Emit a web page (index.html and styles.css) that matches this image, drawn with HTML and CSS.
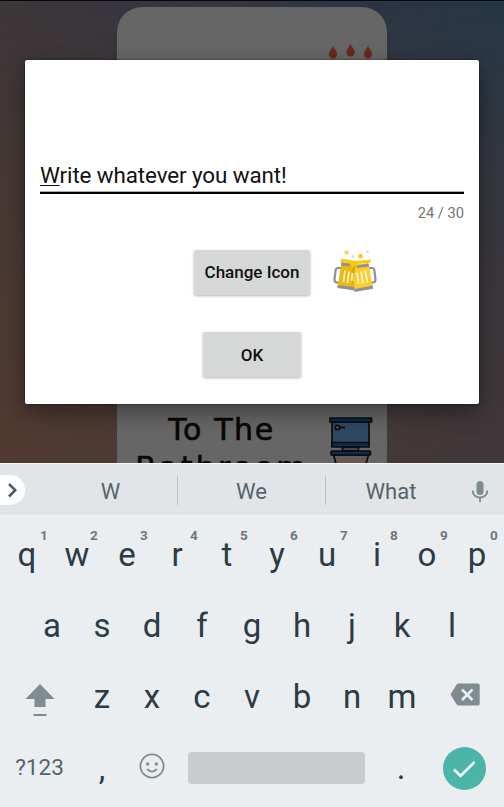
FILE: index.html
```html
<!DOCTYPE html>
<html lang="en">
<head>
<meta charset="utf-8">
<title>Edit choice</title>
<link rel="stylesheet" href="styles.css">
</head>
<body>
<main class="app">
  <section class="list-card">
    <div class="card-top">
      <svg class="drops" width="46" height="22" viewBox="0 0 46 22" fill="#6b271d">
        <path d="M5 4C3.2 7.500 .8 9.800 .8 12.200a4.200 4.200 0 0 0 8.400 0C9.200 9.800 6.800 7.500 5 4Z"/>
        <path d="M22.500 2c-1.800 3.500-4.200 5.800-4.200 8.200a4.200 4.200 0 0 0 8.400 0c0-2.400-2.400-4.700-4.200-8.200Z"/>
        <path d="M40 4c-1.800 3.500-4.200 5.800-4.200 8.200a4.200 4.200 0 0 0 8.400 0c0-2.400-2.400-4.700-4.200-8.200Z"/>
        <path fill="#746039" d="M19 17.500h7v2h-7z"/>
      </svg>
    </div>
    <div class="card-bottom">
      <h2 class="choice"><span class="line-one">To The</span><span class="line-two">Bathroom</span></h2>
      <svg class="toilet" width="44" height="50" viewBox="0 0 44 50" stroke="#0d0b0c" stroke-width="1.700">
        <path fill="#2e4860" d="M3 5h37v24H3z"/>
        <path fill="#042f57" d="M1 1h41.500v4H1zM3 25.500h37V30H3z"/>
        <path fill="#665951" d="M13.500 30.500h16v3h-16z"/>
        <path fill="#665951" d="M4.500 38h35L36 50H8z"/>
        <rect x="2" y="34" width="39.500" height="4" rx="1" fill="#042f57"/>
        <circle cx="8.500" cy="10.500" r="2.200" fill="#665951"/>
        <path d="M10.500 10.500H16"/>
      </svg>
    </div>
  </section>
  <section class="dialog">
    <div class="field"><u>W</u>rite whatever you want!</div>
    <div class="counter">24 / 30</div>
    <div class="icon-row">
      <button class="btn btn-change">Change Icon</button>
      <svg class="beer" width="46" height="46" viewBox="0 0 46 46">
        <circle cx="14.500" cy="4.500" r="2.300" fill="#fbd75b"/>
        <circle cx="21" cy="8.500" r="1.500" fill="#dcdee0"/>
        <circle cx="28.500" cy="8.200" r="2.400" fill="#fbcb16"/>
        <circle cx="35.300" cy="3.700" r="1.500" fill="#dcdee0"/>
        <g fill="none" stroke="#909198" stroke-width="2.200">
          <path d="M9.500 20H6q-2 0-2.300 2L2.500 31q-.2 3 2 3.300l3.500.7"/>
          <path d="M36.500 20H40q2 0 2.300 2l1.200 9q.2 3-2 3.300l-3.500.7"/>
        </g>
        <path fill="#edb90c" d="M9.500 14l15 2-2 25L6 38z"/>
        <path fill="#fbce2a" d="M24.500 16l12-1 4 23.500-18.500 3.500-1.500-12z"/>
        <path fill="#c9960d" d="M23.500 18l-2.500 14 2 8-4-7 2-13z" opacity=".6"/>
        <path fill="#909198" d="M9 14.500l9.500 1v3l-9.500-1zM24.500 17.500l12-2 .5 3-12 1.500zM5.500 37l17 2v3.500l-17-2.500zM22.500 41L41 37.500v3.200l-18.500 3.300z"/>
        <path fill="#fbc90b" d="M9 11q5 0 9 1l6 1 14.500-1.500.5 3-14 1.500-5 3-3-4-8.500-1z"/>
        <g stroke="#fff6d6" stroke-width="1.700">
          <path d="M13 22.500l-1.500 11.500M17 23.500l-1.500 11.500M20.500 25l-1 8M25 24.500l1.500 11.500M29 23.500l2 12M33 22.500l2.500 12"/>
        </g>
      </svg>
    </div>
    <button class="btn btn-ok">OK</button>
  </section>
</main>
<section class="keyboard">
  <div class="suggestions">
    <span class="expand"><svg width="25" height="30" viewBox="0 0 25 30" fill="none" stroke="#4d5d65" stroke-width="2.600"><path d="M9 9l6.200 6.200L9 21.500"/></svg></span>
    <span class="word first">W</span>
    <span class="word second">We</span>
    <span class="word third">What</span>
    <svg class="mic" width="18" height="24" viewBox="0 0 18 24"><rect x="5.500" y="1" width="7" height="14" rx="3.500" fill="#7f8b90"/><path d="M1.800 10.500v1a7.200 6 0 0 0 14.400 0v-1M9 17.500V22" fill="none" stroke="#7f8b90" stroke-width="1.900"/></svg>
  </div>
  <div class="keys">
    <div class="row">
      <span class="key">q<sup>1</sup></span><span class="key">w<sup>2</sup></span><span class="key">e<sup>3</sup></span><span class="key">r<sup>4</sup></span><span class="key">t<sup>5</sup></span><span class="key">y<sup>6</sup></span><span class="key">u<sup>7</sup></span><span class="key">i<sup>8</sup></span><span class="key">o<sup>9</sup></span><span class="key">p<sup>0</sup></span>
    </div>
    <div class="row">
      <span class="key">a</span><span class="key">s</span><span class="key">d</span><span class="key">f</span><span class="key">g</span><span class="key">h</span><span class="key">j</span><span class="key">k</span><span class="key">l</span>
    </div>
    <div class="row">
      <span class="key wide shift"><svg width="30" height="34" viewBox="0 0 30 34" fill="#7f8b90"><path d="M15 1l14.500 15H20.500v8h-11v-8H.5zM8.500 31h13v2h-13z"/></svg></span><span class="key">z</span><span class="key">x</span><span class="key">c</span><span class="key">v</span><span class="key">b</span><span class="key">n</span><span class="key">m</span><span class="key wide erase"><svg width="30" height="23" viewBox="0 0 30 23"><path fill="#7f8b90" d="M8.500.5H28q1.700 0 1.700 1.700v18.600q0 1.700-1.700 1.700H8.500Q7.500 22.500 6.700 21.500L.5 11.500l6.200-10Q7.500.5 8.500.5z"/><path d="M12 6.500l10.500 10.500M22.500 6.500L12 17" stroke="#ebeef1" stroke-width="2.500"/></svg></span>
    </div>
    <div class="row bottom">
      <span class="key wide symbols">?123</span><span class="key">,</span><span class="key"><svg width="26" height="26" viewBox="0 0 26 26" fill="#7f8b90"><circle cx="13" cy="13" r="11.600" fill="none" stroke="#7f8b90" stroke-width="1.800"/><circle cx="8.700" cy="11" r="1.700"/><circle cx="17.300" cy="11" r="1.700"/><path d="M8 16.200q5 4.800 10 0" fill="none" stroke="#7f8b90" stroke-width="1.800"/></svg></span><span class="space"></span><span class="key dot">.</span><span class="enter"><svg width="43" height="43" viewBox="0 0 43 43" fill="none" stroke="#fff" stroke-width="2.500"><path d="M11 22.500l6.500 6.500L31.500 15"/></svg></span>
    </div>
  </div>
</section>
</body>
</html>
```
FILE: styles.css
```css
* { box-sizing: border-box; }
body {
  margin: 0;
  width: 504px;
  height: 807px;
  overflow: hidden;
  font-family: Roboto, sans-serif;
}
.app {
  position: relative;
  height: 463px;
  padding-top: 6px;
  border-top: 1px solid #08080c;
  overflow: hidden;
  background:
    linear-gradient(to bottom, transparent, rgba(75, 58, 52, .95)),
    linear-gradient(to right, #3d373a, #333442 50%, #263747);
}
.app::before {
  content: "";
  position: absolute;
  inset: 0;
  background: linear-gradient(to right, rgba(88, 60, 43, .5), transparent 50%, rgba(58, 54, 63, .55));
  -webkit-mask-image: linear-gradient(transparent, #000);
  mask-image: linear-gradient(transparent, #000);
}
.list-card {
  position: relative;
  display: flex;
  flex-direction: column;
  justify-content: space-between;
  width: 270px;
  height: 480px;
  margin-left: 117px;
  border-radius: 25px;
  background: #666;
}
.card-top { display: flex; justify-content: flex-end; padding: 35px 13px 0 0; }
.card-bottom { display: flex; height: 76px; }
.choice {
  display: flex;
  flex-direction: column;
  width: 206px;
  margin: 0;
  padding-top: 1px;
  color: #080606;
  font: 400 30px/36px "DejaVu Sans", sans-serif;
  -webkit-text-stroke: .6px #080606;
  text-align: center;
}
.line-one { letter-spacing: 1.6px; padding-left: 3px; }
.line-two { letter-spacing: 3.3px; padding: 2px 0 0 4px; }
.toilet { margin: 6px 0 0 6px; }
.dialog {
  position: absolute;
  left: 25px;
  top: 59px;
  display: flex;
  flex-direction: column;
  width: 454px;
  height: 344px;
  padding: 97px 15px 0;
  border-radius: 2px;
  background: #fff;
  box-shadow: 0 0 2px rgba(0, 0, 0, .7), 0 8px 22px rgba(0, 0, 0, .4);
}
.field {
  height: 37px;
  border-bottom: 2px solid #000;
  box-shadow: inset 0 -1px #aaa;
  color: #111;
  font-size: 22.400px;
  line-height: 36px;
  letter-spacing: -.1px;
}
.field u { text-decoration-thickness: 1px; text-underline-offset: 2px; }
.counter {
  height: 56px;
  padding-top: 9px;
  color: #747474;
  font-size: 14.700px;
  line-height: 20px;
  text-align: right;
}
.icon-row { display: flex; height: 82px; margin-left: 154px; gap: 22px; }
.btn {
  height: 45px;
  padding: 0;
  border: 0;
  border-radius: 2px;
  background: #d6d8d7;
  color: #111;
  font: 500 17px/45px Roboto, sans-serif;
  box-shadow: 0 1px 3px rgba(0, 0, 0, .3);
}
.btn-change { width: 116px; }
.btn-ok { width: 98px; margin-left: 163px; padding-top: 1px; }
.beer { margin-top: -2px; }
.keyboard { height: 344px; background: #ebeef1; }
.suggestions {
  display: flex;
  align-items: center;
  height: 54px;
  border-top: 1px solid #f8f9fa;
  border-bottom: 2px solid #f1f3f5;
  background: #e2e5e8;
  color: #55646b;
  font-size: 22px;
}
.expand {
  width: 25px;
  height: 30px;
  margin-top: 1px;
  border-radius: 0 15px 15px 0;
  background: #fff;
}
.expand svg { display: block; }
.word { height: 29px; margin-top: 1px; line-height: 32px; text-align: center; }
.first { width: 153px; padding-left: 19px; border-right: 1px solid #bbc0c3; }
.second { width: 148px; border-right: 1px solid #bbc0c3; }
.third { width: 130px; }
.mic { margin: 4px 0 0 15px; }
.keys { padding: 2px 2px 0; color: #2b3c45; font-size: 33px; }
.row { display: flex; justify-content: center; align-items: center; height: 71px; }
.key {
  position: relative;
  display: flex;
  align-items: center;
  justify-content: center;
  width: 50px;
  height: 71px;
}
.key svg { display: block; }
.key sup {
  position: absolute;
  left: 38px;
  top: 8px;
  font-size: 13.500px;
  font-weight: 700;
  line-height: 16px;
  color: #6b787e;
}
.wide { width: 75px; }
.shift svg { margin-top: 6px; }
.erase svg { margin-top: -4px; }
.bottom { padding-top: 1px; }
.symbols { color: #55646b; font-size: 22.500px; }
.bottom .key { height: 69px; }
.bottom .key svg { margin-top: -4px; }
.bottom .symbols, .bottom .dot { padding-bottom: 2px; }
.space { width: 177px; height: 32px; margin: 0 11px; border-radius: 4px; background: #c8cccf; }
.enter { width: 43px; height: 43px; margin: 0 16px 0 17px; border-radius: 50%; background: #4bb5aa; }
.enter svg { display: block; }
```
